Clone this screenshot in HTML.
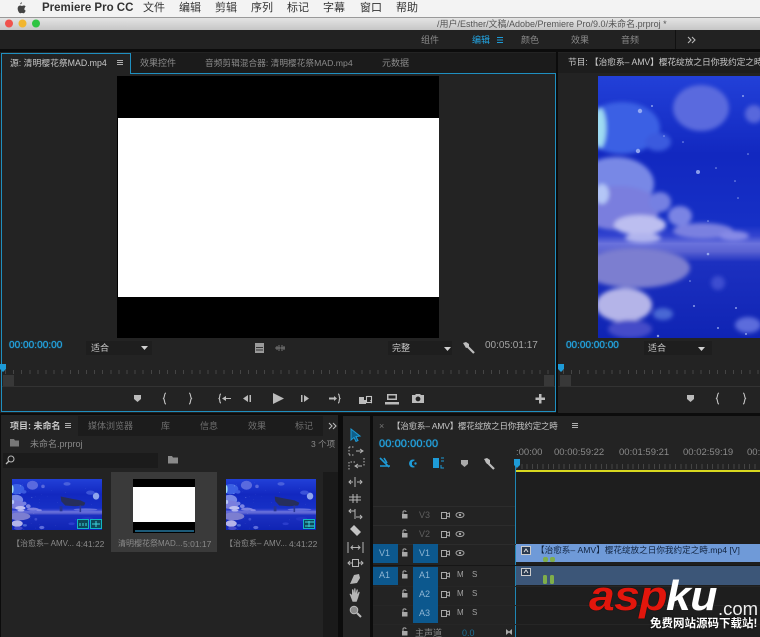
<!DOCTYPE html>
<html><head><meta charset="utf-8">
<style>
html,body{margin:0;padding:0;background:#0c0c0c}
#p{position:relative;width:760px;height:637px;overflow:hidden;background:#0c0c0c;font-family:"Liberation Sans","Noto Sans CJK SC",sans-serif;filter:blur(.35px)}
.b{position:absolute}
.t{position:absolute;white-space:nowrap;line-height:12px;font-size:9px;color:#8a8a8a}
.w{color:#c8c8c8}
.c{color:#23a6e4;text-shadow:0 0 1px #23a6e4}
.m{font-size:11px;color:#333;top:2px}
.tk{position:absolute;height:4px;background:repeating-linear-gradient(90deg,#454545 0 1px,transparent 1px 8.1px)}
svg{position:absolute;left:0;top:0}
</style></head><body><div id="p">

<!-- top bars -->
<div class="b" style="left:0;top:0;width:760px;height:17px;background:#f3f3f3"></div>
<div class="b" style="left:0;top:17px;width:760px;height:1px;background:#999"></div>
<div class="b" style="left:0;top:18px;width:760px;height:12px;background:linear-gradient(#e4e4e4,#c6c6c6)"></div>
<div class="b" style="left:0;top:30px;width:760px;height:19px;background:#222"></div>
<span class="t" style="left:42px;top:2px;font-size:11.5px;font-weight:bold;color:#333">Premiere Pro CC</span>
<span class="t m" style="left:143px">文件</span><span class="t m" style="left:179px">编辑</span><span class="t m" style="left:215px">剪辑</span><span class="t m" style="left:251px">序列</span><span class="t m" style="left:287px">标记</span><span class="t m" style="left:323px">字幕</span><span class="t m" style="left:360px">窗口</span><span class="t m" style="left:396px">帮助</span>
<span class="t" style="left:437px;top:18px;color:#555;font-size:9px">/用户/Esther/文稿/Adobe/Premiere Pro/9.0/未命名.prproj *</span>
<span class="t" style="left:421px;top:34px">组件</span><span class="t c" style="left:472px;top:34px;text-shadow:none">编辑</span><span class="t" style="left:521px;top:34px">颜色</span><span class="t" style="left:571px;top:34px">效果</span><span class="t" style="left:621px;top:34px">音频</span>
<div class="b" style="left:675px;top:30px;width:1px;height:19px;background:#111"></div>

<!-- source panel -->
<div class="b" style="left:0;top:52px;width:556px;height:361px;background:#232323"></div>
<div class="b" style="left:0;top:53px;width:556px;height:20px;background:#1b1b1b"></div>
<div class="b" style="left:1px;top:53px;width:129px;height:20px;background:#232323"></div>
<div class="b" style="left:1px;top:53px;width:129px;height:1px;background:#1f8fc0"></div>
<div class="b" style="left:130px;top:53px;width:1px;height:20px;background:#1f8fc0"></div>
<div class="b" style="left:130px;top:73px;width:425px;height:1px;background:#1f8fc0"></div>
<div class="b" style="left:1px;top:53px;width:1px;height:359px;background:#1f8fc0"></div>
<div class="b" style="left:555px;top:73px;width:1px;height:339px;background:#1f8fc0"></div>
<div class="b" style="left:1px;top:411px;width:555px;height:1px;background:#1f8fc0"></div>
<div class="b" style="left:117px;top:76px;width:322px;height:262px;background:#000"></div>
<div class="b" style="left:118px;top:118px;width:321px;height:179px;background:#fff"></div>
<span class="t w" style="left:10px;top:57px;font-size:8.8px">源: 清明樱花祭MAD.mp4</span>
<span class="t" style="left:140px;top:57px">效果控件</span>
<span class="t" style="left:205px;top:57px;font-size:8.7px">音频剪辑混合器: 清明樱花祭MAD.mp4</span>
<span class="t" style="left:382px;top:57px">元数据</span>
<span class="t c" style="left:9px;top:340px;font-size:10px;letter-spacing:.05px">00:00:00:00</span>
<div class="b" style="left:86px;top:341px;width:66px;height:14px;background:#1e1e1e"></div>
<span class="t w" style="left:91px;top:342px">适合</span>
<div class="b" style="left:388px;top:341px;width:64px;height:14px;background:#1e1e1e"></div>
<span class="t w" style="left:392px;top:342px">完整</span>
<span class="t" style="left:485px;top:340px;font-size:10px;color:#a5a5a5">00:05:01:17</span>
<div class="tk" style="left:5px;top:370px;width:548px"></div>
<div class="b" style="left:3px;top:375px;width:11px;height:11px;background:#383838"></div>
<div class="b" style="left:544px;top:375px;width:10px;height:11px;background:#383838"></div>
<div class="b" style="left:2px;top:386px;width:553px;height:1px;background:#333"></div>

<!-- program panel -->
<div class="b" style="left:558px;top:52px;width:202px;height:361px;background:#232323"></div>
<div class="b" style="left:558px;top:53px;width:202px;height:20px;background:#1d1d1d"></div>
<span class="t w" style="left:568px;top:56px;font-size:8.8px;letter-spacing:-.15px">节目: 【治愈系– AMV】樱花绽放之日你我约定之時</span>
<span class="t c" style="left:566px;top:340px;font-size:10px">00:00:00:00</span>
<div class="b" style="left:644px;top:341px;width:68px;height:14px;background:#1e1e1e"></div>
<span class="t w" style="left:648px;top:342px">适合</span>
<div class="tk" style="left:563px;top:370px;width:197px"></div>
<div class="b" style="left:560px;top:375px;width:11px;height:11px;background:#383838"></div>
<div class="b" style="left:558px;top:386px;width:202px;height:1px;background:#333"></div>

<!-- project panel -->
<div class="b" style="left:1px;top:415px;width:339px;height:222px;background:#232323"></div>
<div class="b" style="left:78px;top:416px;width:245px;height:20px;background:#1c1c1c"></div>
<span class="t w" style="left:10px;top:420px;font-weight:bold">项目: 未命名</span>
<span class="t" style="left:88px;top:420px;color:#6f6f6f">媒体浏览器</span><span class="t" style="left:161px;top:420px;color:#6f6f6f">库</span><span class="t" style="left:200px;top:420px;color:#6f6f6f">信息</span><span class="t" style="left:248px;top:420px;color:#6f6f6f">效果</span><span class="t" style="left:295px;top:420px;color:#6f6f6f">标记</span>
<span class="t" style="left:30px;top:438px">未命名.prproj</span>
<span class="t" style="left:311px;top:438px;font-size:8.5px">3 个项</span>
<div class="b" style="left:3px;top:453px;width:155px;height:15px;background:#1b1b1b"></div>
<div class="b" style="left:323px;top:472px;width:15px;height:165px;background:#1a1a1a"></div>
<div class="b" style="left:338px;top:415px;width:5px;height:222px;background:#0c0c0c"></div>
<div class="b" style="left:111px;top:472px;width:106px;height:80px;background:#3a3a3a"></div>
<div class="b" style="left:133px;top:479px;width:62px;height:54px;background:#000"></div>
<div class="b" style="left:133px;top:487px;width:62px;height:35px;background:#fff"></div>
<div class="b" style="left:135px;top:530px;width:59px;height:2px;background:#1c5a78"></div>
<span class="t" style="left:12px;top:538px;font-size:8px">【治愈系– AMV...</span><span class="t" style="left:76px;top:538px;font-size:8.5px">4:41:22</span>
<span class="t" style="left:118px;top:538px;font-size:8px">清明樱花祭MAD...</span><span class="t" style="left:183px;top:538px;font-size:8.5px">5:01:17</span>
<span class="t" style="left:225px;top:538px;font-size:8px">【治愈系– AMV...</span><span class="t" style="left:289px;top:538px;font-size:8.5px">4:41:22</span>

<!-- tools -->
<div class="b" style="left:343px;top:416px;width:27px;height:221px;background:#252525"></div>

<!-- timeline -->
<div class="b" style="left:373px;top:416px;width:387px;height:221px;background:#232323"></div>
<div class="b" style="left:515px;top:472px;width:245px;height:165px;background:#1e1e1e"></div>
<span class="t" style="left:379px;top:420px;color:#777">×</span>
<span class="t w" style="left:392px;top:420px;font-size:8.5px;letter-spacing:-.2px">【治愈系– AMV】樱花绽放之日你我约定之時</span>
<span class="t c" style="left:379px;top:438px;font-size:11px;letter-spacing:.1px">00:00:00:00</span>
<span class="t" style="left:516px;top:447px;font-size:9.5px">:00:00</span>
<span class="t" style="left:554px;top:447px;font-size:9.5px">00:00:59:22</span>
<span class="t" style="left:619px;top:447px;font-size:9.5px">00:01:59:21</span>
<span class="t" style="left:683px;top:447px;font-size:9.5px">00:02:59:19</span>
<span class="t" style="left:747px;top:447px;font-size:9.5px">00:</span>
<div class="tk" style="left:516px;top:464px;width:244px;height:5px;background:repeating-linear-gradient(90deg,#444 0 1px,transparent 1px 5.3px)"></div>
<div class="b" style="left:515px;top:470px;width:245px;height:1.5px;background:#d8d820"></div>
<div class="b" style="left:515px;top:466px;width:1px;height:171px;background:#1f86b4"></div>

<!-- track rows -->
<div class="b" style="left:373px;top:506px;width:142px;height:1px;background:#2c2c2c"></div>
<div class="b" style="left:373px;top:525px;width:142px;height:1px;background:#2c2c2c"></div>
<div class="b" style="left:373px;top:544px;width:387px;height:1px;background:#2c2c2c"></div>
<div class="b" style="left:373px;top:565px;width:387px;height:1px;background:#161616"></div>
<div class="b" style="left:373px;top:586px;width:387px;height:1px;background:#262626"></div>
<div class="b" style="left:373px;top:605px;width:387px;height:1px;background:#262626"></div>
<div class="b" style="left:373px;top:624px;width:387px;height:1px;background:#262626"></div>
<div class="b" style="left:373px;top:544px;width:25px;height:19px;background:#0c588e"></div>
<div class="b" style="left:373px;top:567px;width:25px;height:18px;background:#0c588e"></div>
<div class="b" style="left:413px;top:544px;width:25px;height:19px;background:#0c588e"></div>
<div class="b" style="left:413px;top:567px;width:25px;height:56px;background:#0c588e"></div>
<span class="t" style="left:419px;top:509px;color:#5f5f5f">V3</span>
<span class="t" style="left:419px;top:528px;color:#5f5f5f">V2</span>
<span class="t" style="left:379px;top:547px;color:#8db5d3">V1</span><span class="t" style="left:419px;top:547px;color:#8db5d3">V1</span>
<span class="t" style="left:379px;top:569px;color:#8db5d3">A1</span><span class="t" style="left:419px;top:569px;color:#8db5d3">A1</span>
<span class="t" style="left:419px;top:588px;color:#8db5d3">A2</span><span class="t" style="left:419px;top:607px;color:#8db5d3">A3</span>
<span class="t" style="left:457px;top:569px;font-size:8px;color:#a0a0a0">M</span><span class="t" style="left:472px;top:569px;font-size:8px;color:#a0a0a0">S</span>
<span class="t" style="left:457px;top:588px;font-size:8px;color:#a0a0a0">M</span><span class="t" style="left:472px;top:588px;font-size:8px;color:#a0a0a0">S</span>
<span class="t" style="left:457px;top:607px;font-size:8px;color:#a0a0a0">M</span><span class="t" style="left:472px;top:607px;font-size:8px;color:#a0a0a0">S</span>
<span class="t" style="left:415px;top:627px">主声道</span>
<span class="t" style="left:462px;top:627px;color:#1a6f96">0.0</span>

<!-- clips -->
<div class="b" style="left:516px;top:544px;width:244px;height:18px;background:#6f9ad8"></div>
<div class="b" style="left:516px;top:566px;width:244px;height:19px;background:#3c5678"></div>
<span class="t" style="left:536px;top:544px;color:#10233f;font-size:8.6px">【治愈系– AMV】樱花绽放之日你我约定之時.mp4 [V]</span>

<!-- vector layer -->
<svg width="760" height="637" viewBox="0 0 760 637">
<defs>
<filter id="f" x="-30%" y="-30%" width="160%" height="160%"><feGaussianBlur stdDeviation="2"/></filter>
<linearGradient id="g" x1="0" y1="0" x2="0" y2="1"><stop offset="0" stop-color="#2240d8"/><stop offset=".3" stop-color="#1228c0"/><stop offset=".57" stop-color="#1630c6"/><stop offset=".61" stop-color="#3444d0"/><stop offset=".64" stop-color="#6a72dc"/><stop offset=".67" stop-color="#5a62d2"/><stop offset=".71" stop-color="#1c30c0"/><stop offset="1" stop-color="#0f24b4"/></linearGradient>
<symbol id="sky" viewBox="0 0 453 262" preserveAspectRatio="none" overflow="hidden">
<rect width="453" height="262" fill="url(#g)"/>
<g filter="url(#f)">
<!-- upper clouds -->
<ellipse cx="103" cy="32" rx="28" ry="23" fill="#5a6ade"/><ellipse cx="156" cy="38" rx="9" ry="9" fill="#5868dc"/>
<ellipse cx="24" cy="52" rx="38" ry="26" fill="#3a60e4"/><ellipse cx="60" cy="66" rx="13" ry="9" fill="#3a5ade"/>
<ellipse cx="277" cy="25" rx="18" ry="9" fill="#4a60dc"/>
<ellipse cx="423" cy="88" rx="16" ry="18" fill="#8fa4ec"/><ellipse cx="395" cy="70" rx="22" ry="11" fill="#3a52d8"/>
<!-- cyan -->
<ellipse cx="2" cy="52" rx="6" ry="20" fill="#9fdcf2"/>
<!-- lavender mass -->
<ellipse cx="18" cy="108" rx="38" ry="27" fill="#7888e6"/><ellipse cx="20" cy="132" rx="42" ry="22" fill="#7a7ede"/>
<ellipse cx="62" cy="126" rx="11" ry="10" fill="#7480e2"/><ellipse cx="82" cy="140" rx="12" ry="10" fill="#7a84e4"/>
<ellipse cx="4" cy="118" rx="7" ry="10" fill="#b4c6f6"/>
<ellipse cx="42" cy="149" rx="26" ry="10" fill="#bcbef0"/><ellipse cx="45" cy="162" rx="18" ry="5" fill="#b0b4ee"/>
<ellipse cx="105" cy="155" rx="30" ry="8" fill="#7a80e0"/><ellipse cx="136" cy="160" rx="15" ry="5" fill="#868ae6"/>
<!-- right horizon clouds -->
<ellipse cx="370" cy="157" rx="60" ry="6" fill="#6470dc"/>
<!-- reflection -->
<ellipse cx="38" cy="192" rx="54" ry="20" fill="#7c7ed0"/>
<ellipse cx="26" cy="229" rx="28" ry="17" fill="#b4b4e8"/><ellipse cx="32" cy="253" rx="22" ry="9" fill="#444cc8"/>
<ellipse cx="65" cy="238" rx="10" ry="6" fill="#4a68d4"/><ellipse cx="150" cy="249" rx="13" ry="8" fill="#5c6cdc"/>
<ellipse cx="120" cy="207" rx="7" ry="7" fill="#3c4ed0"/>
<ellipse cx="380" cy="205" rx="28" ry="10" fill="#2436c4"/><ellipse cx="300" cy="230" rx="16" ry="7" fill="#2a3ccc"/>
</g>
<g fill="#a8baf6" opacity=".8">
<circle cx="42" cy="35" r="2.200"/><circle cx="40" cy="75" r="2.200"/><circle cx="100" cy="96" r="2"/><circle cx="110" cy="178" r="1.300"/><circle cx="54" cy="30" r="1"/><circle cx="145" cy="20" r="1"/><circle cx="110" cy="145" r=".8"/><circle cx="140" cy="122" r=".8"/><circle cx="66" cy="60" r=".8"/><circle cx="85" cy="66" r=".8"/><circle cx="150" cy="78" r=".8"/><circle cx="118" cy="92" r=".8"/><circle cx="137" cy="105" r=".8"/><circle cx="96" cy="230" r="1"/><circle cx="138" cy="232" r="1"/><circle cx="120" cy="252" r="1"/><circle cx="148" cy="258" r="1"/><circle cx="92" cy="205" r=".8"/><circle cx="60" cy="260" r="1.200"/>
<circle cx="200" cy="60" r=".8"/><circle cx="230" cy="120" r="1"/><circle cx="270" cy="70" r="1"/><circle cx="320" cy="210" r="1"/><circle cx="370" cy="50" r="1"/><circle cx="400" cy="130" r="1"/><circle cx="220" cy="240" r="1"/><circle cx="180" cy="90" r=".8"/>
</g>
<!-- piano -->
<g filter="url(#f)"><path d="M245 90l50 10 50 10 24 12-6 14-45 4-50-4-20-22z" fill="#262e5c"/><rect x="240" y="140" width="14" height="26" fill="#263494"/><rect x="340" y="136" width="8" height="34" fill="#2c3896"/></g>
</symbol>
</defs>

<!-- apple -->
<path d="M20.5 4.2c.8 0 1.4-1 1.4-2-.9.1-1.7 1-1.6 2zM24.600 8.500c0-1.300 1-1.900 1.100-2-.6-.9-1.500-1-1.900-1-.8-.1-1.500.5-1.900.5s-1-.5-1.700-.5c-.9 0-1.700.5-2.100 1.300-.9 1.600-.2 3.900.6 5.200.4.600.9 1.300 1.600 1.300.6 0 .9-.4 1.600-.4s1 .4 1.600.4c.7 0 1.100-.6 1.500-1.300.5-.7.700-1.400.7-1.400-.1 0-1.500-.6-1.500-2.100z" fill="#444"/>
<!-- traffic lights -->
<circle cx="9" cy="23.500" r="4" fill="#f0524c"/><circle cx="22.500" cy="23.500" r="4" fill="#f2b62f"/><circle cx="36" cy="23.500" r="4" fill="#2fc443"/>
<!-- monitors: program + thumbs -->
<svg x="598" y="76" width="162" height="262" viewBox="0 0 162 262"><use href="#sky" width="453" height="262"/></svg>
<use href="#sky" x="12" y="479" width="90" height="51"/>
<use href="#sky" x="226" y="479" width="90" height="51"/>
<!-- thumbnail badges -->
<g fill="#0d4a58" stroke="#12b5c4" stroke-width="1">
<rect x="77.500" y="519.500" width="11" height="9"/><rect x="90.500" y="519.500" width="11" height="9"/><rect x="303.500" y="519.500" width="11" height="9"/>
</g>
<g stroke="#3fd6e0" stroke-width="1" fill="none"><path d="M80 523v3M83 523v3M86 523v3M92 524h8M96 521v6M305 522h9M305 526h9M309 521v6"/></g>
<!-- hamburger menus -->
<g stroke="#b0b0b0" stroke-width="1"><path d="M117 60.500h6M117 62.500h6M117 64.500h6M65 423.500h6M65 425.500h6M65 427.500h6M572 423.500h6M572 425.500h6M572 427.500h6"/></g>
<path d="M497 37.500h6M497 40h6M497 42.500h6" stroke="#1e9bd7" stroke-width="1"/>
<!-- chevrons -->
<g stroke="#b8b8b8" stroke-width="1.100" fill="none"><path d="M688 37l3 3-3 3M692 37l3 3-3 3M329 423l3 3-3 3M333 423l3 3-3 3"/></g>
<!-- dropdown arrows -->
<g fill="#d0d0d0"><path d="M141 346h7l-3.500 4zM444 347h7l-3.500 4zM698 347h7l-3.500 4z"/></g>
<!-- film + waveform -->
<rect x="255" y="343" width="9" height="10" fill="#9a9a9a"/><path d="M256 347.500h7M256 350h7" stroke="#333"/>
<path d="M275 348h10M277 346v4M279 345v6M282 345v6M284 346v4" stroke="#888" stroke-width=".8"/>
<!-- wrench -->
<g fill="none" stroke="#bdbdbd" stroke-width="2.200"><path d="M465 344l3 3 6 6"/></g><path d="M463 343l3-1 3 2v3l-3 1z" fill="#bdbdbd"/>
<g fill="none" stroke="#bdbdbd" stroke-width="2.200"><path d="M486 461l3 3 5 5"/></g><path d="M484 459l3-1 3 2v3l-3 1z" fill="#bdbdbd"/>
<!-- playheads -->
<path d="M0 364h6v5l-3 3-3-3zM558 364h6v5l-3 3-3-3z" fill="#1e9bd7"/>
<path d="M514 459h6v6l-3 3-3-3z" fill="#1e9bd7"/>
<!-- source transport -->
<g fill="#bbb">
<path d="M134 395h7v4l-3.500 3-3.500-3zM687 395h7v4l-3.500 3-3.500-3z"/>
<path d="M248 395l-5 3.500 5 3.500zM249.500 395h1.500v7h-1.500zM273 393l11 5.500-11 5.500zM301 395h1.500v7H301zM304 395l5 3.500-5 3.500z"/>
<path d="M226 396l-4 2.500 4 2.500zM226 398h5v1h-5zM329 397.500h5v-1.500l3 2.500-3 2.500v-1.500h-5z"/>
<path d="M359 397h5v3h2v4h-7zM372 404v-4h-2"/>
<rect x="385" y="402" width="14" height="2.500"/><path d="M387 394h10v6h-10zM388.500 395.500v3h7v-3z" fill-rule="evenodd"/>
<path d="M412 395h3l1-1h4l1 1h3v8h-12zM418 396.500a2.400 2.400 0 1 0 .01 0z" fill-rule="evenodd"/>
<path d="M539 394h2.500v3.500H545V400h-3.500v3.500H539V400h-3.500v-2.500H539z"/>
</g>
<g fill="none" stroke="#c4c4c4" stroke-width="1.100"><path d="M166 393c-2 0-1 4-2.500 5.500 1.500 1 .5 5.500 2.500 5.500M189 393c2 0 1 4 2.500 5.500-1.500 1-.5 5.500-2.500 5.500M719 393c-2 0-1 4-2.500 5.500 1.500 1 .5 5.500 2.500 5.500M743 393c2 0 1 4 2.500 5.500-1.500 1-.5 5.500-2.500 5.500M221 394c-2 0-.5 3-2 4.500 1.500 1 0 4.500 2 4.500M338 394c2 0 .5 3 2 4.500-1.500 1 0 4.500-2 4.500"/><rect x="366.500" y="396.500" width="5" height="6"/></g>
<!-- project icons -->
<path d="M10 439h4l1 1.500h4v6h-9z" fill="#777"/><circle cx="11" cy="459" r="3" fill="none" stroke="#bbb" stroke-width="1"/><path d="M9 461l-3 3" stroke="#bbb" stroke-width="1.300"/>
<path d="M168 456h4l1 1.500h5v6h-10z" fill="#8a8a8a"/>
<!-- tools -->
<path d="M351 429l0 11 3-2.500 2 4 2-1-2-4 4-.5z" fill="#0f5f8a" stroke="#1e9bd7" stroke-width="1"/>
<g fill="none" stroke="#b5b5b5" stroke-width="1">
<path stroke-dasharray="1.500 1.500" d="M349 447h6M349 455h6M349 447v8M364 458v8M355 462h-6M349 462v8"/>
<path d="M356 451h6M360 449l3 2-3 2M362 466h-7M358 464l-3 2 3 2"/>
<path d="M349 482h4M357 482h5M355 477v10M351 480l-2 2 2 2M360 480l2 2-2 2"/>
<path d="M349 497h12M349 500h12M353 494v9M357 494v9"/>
<path d="M349 511h6M351 509l-2 2 2 2M362 517h-6M360 515l2 2-2 2M355 509v10"/>
<path d="M348 542v11M363 542v11M351 547.500h9M353 545.500l-2 2 2 2M358 545.500l2 2-2 2"/>
<path d="M348 563h4M359 563h4M350 561l-2 2 2 2M361 561l2 2-2 2"/><rect x="352.500" y="559.500" width="6" height="7"/>
</g>
<path d="M350 529l4-4 7 7-4 4z" fill="#c4c4c4"/>
<path d="M350 584l4-9 5-1 1 4-3 5zM350 584l-1 2" fill="#b5b5b5"/>
<path d="M350 595c-1-1 0-2 1-1l1 1v-5c0-1 1-1 1.500 0l.5 3 .2-4c0-1 1.300-1 1.300 0l.2 4 .8-3c.3-1 1.500-.8 1.300.2l-.6 4 1.200-2c.5-.8 1.500-.3 1.200.5l-1.500 5-1.500 4h-4z" fill="#b5b5b5"/>
<circle cx="354" cy="610" r="3.800" fill="#8a8a8a" stroke="#bbb"/><path d="M357 613l4 4" stroke="#bbb" stroke-width="2"/>
<!-- timeline toolbar -->
<g stroke="#1e9bd7" fill="#1e9bd7">
<path d="M380 458l9 9M380 466h10M384 458l3 5" fill="none" stroke-width="1.600"/>
<path d="M415 460a4 4 0 1 0 0 7l-3-2v-3z" stroke="none"/><circle cx="415.500" cy="463.500" r="1.200" stroke="none"/>
<rect x="433" y="458" width="6" height="10" stroke="none"/><path d="M441 458h3M441 461h3M441 465v3h3" fill="none" stroke-width="1"/>
</g>
<path d="M461 460h7v4l-3.500 3-3.500-3z" fill="#aaa"/>
<!-- track headers -->
<g fill="#a8a8a8">
<path d="M402 514h5.500v4.500H402zM402 533h5.500v4.500H402zM402 552h5.500v4.500H402zM402 574h5.500v4.500H402zM402 593h5.500v4.500H402zM402 612h5.500v4.500H402zM402 631h5.500v4.500H402z"/>
<path d="M506 629l3 2.500 3-2.500v6l-3-2.500-3 2.500z"/>
</g>
<g fill="none" stroke="#a8a8a8" stroke-width="1">
<path d="M403 514v-2c0-1.500 3-1.500 3 0M403 533v-2c0-1.500 3-1.500 3 0M403 552v-2c0-1.500 3-1.500 3 0M403 574v-2c0-1.500 3-1.500 3 0M403 593v-2c0-1.500 3-1.500 3 0M403 612v-2c0-1.500 3-1.500 3 0M403 631v-2c0-1.500 3-1.500 3 0"/>
<path d="M441.500 512.500h5v6h-5zM446.500 514l3-1v4l-3-1M441.500 531.500h5v6h-5zM446.500 533l3-1v4l-3-1M441.500 550.500h5v6h-5zM446.500 552l3-1v4l-3-1M441.500 572.500h5v6h-5zM446.500 574l3-1v4l-3-1M441.500 591.500h5v6h-5zM446.500 593l3-1v4l-3-1M441.500 610.500h5v6h-5zM446.500 612l3-1v4l-3-1"/>
<ellipse cx="460" cy="515" rx="4" ry="2.500"/><ellipse cx="460" cy="534" rx="4" ry="2.500"/><ellipse cx="460" cy="553" rx="4" ry="2.500"/>
</g>
<g fill="#a8a8a8"><circle cx="460" cy="515" r="1.200"/><circle cx="460" cy="534" r="1.200"/><circle cx="460" cy="553" r="1.200"/></g>
<!-- clip icons + greens -->
<rect x="521.500" y="546.500" width="9" height="8" fill="#2a3a50" stroke="#ccc"/><rect x="521.500" y="568.500" width="9" height="7" fill="#2a3a50" stroke="#ccc"/>
<path d="M524 552l2-3 2 3M524 573l2-3 2 3" stroke="#ddd" fill="none"/>
<g fill="#7fae4a"><rect x="543" y="557" width="5" height="5" rx="2"/><rect x="550" y="557" width="5" height="5" rx="2"/><rect x="543" y="575" width="4" height="9" rx="1.500"/><rect x="550" y="575" width="4" height="9" rx="1.500"/></g>
</svg>

<!-- watermark -->
<span class="t" style="left:589px;top:573px;font-size:42px;line-height:46px;font-weight:bold;font-style:italic;color:#e2160c;letter-spacing:-.5px;transform:scaleX(1.1);transform-origin:0 0;text-shadow:0 0 1px #000">asp</span>
<span class="t" style="left:666px;top:573px;font-size:42px;line-height:46px;font-weight:bold;font-style:italic;color:#fff;letter-spacing:-.5px;transform:scaleX(1.06);transform-origin:0 0">ku</span>
<span class="t" style="left:718px;top:598px;font-size:18.5px;line-height:22px;color:#eee">.com</span>
<span class="t" style="left:650px;top:617px;font-size:11.500px;line-height:15px;color:#fff;font-weight:bold;text-shadow:0 0 2px #000">免费网站源码下载站!</span>
</div></body></html>
